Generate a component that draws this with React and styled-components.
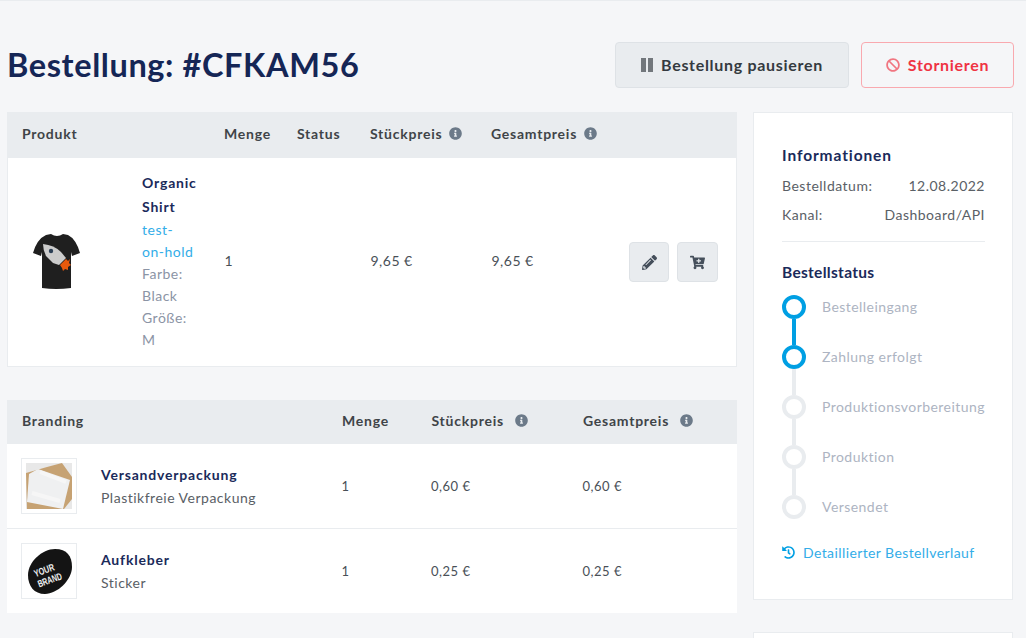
import React from 'react';
import styled, {createGlobalStyle} from 'styled-components';
import {FaBan, FaInfoCircle, FaPencilAlt, FaCartPlus, FaHistory} from 'react-icons/fa';

const GlobalStyle = createGlobalStyle`
  html, body {
    margin: 0;
    height: 638px;
    overflow: hidden;
    background: #f5f6f8;
  }
  * { box-sizing: border-box; }
  body {
    font-family: Lato, "Open Sans", sans-serif;
    font-size: 14px;
    letter-spacing: 0.5px;
    color: #495057;
  }
`
const Page = styled.div`
  border-top: 1px solid #e9ecef;
  padding: 41px 12px 0 7px;
`
const Header = styled.header`
  display: flex;
  justify-content: space-between;
  align-items: center;
  height: 46px;
  margin-bottom: 24px;
`
const Title = styled.h1`
  margin: 0 0 2px;
  font-size: 32.5px;
  font-weight: 700;
  letter-spacing: 0.6px;
  color: #152656;
`
const Actions = styled.div`
  display: flex;
  gap: 12px;
`
const Button = styled.button`
  display: flex;
  align-items: center;
  justify-content: center;
  gap: 8px;
  width: ${props => props.$danger ? '153px' : '234px'};
  height: 46px;
  padding: 0 0 2px;
  border-radius: 4px;
  border: 1px solid ${props => props.$danger ? '#f9a9af' : '#dee2e6'};
  background: ${props => props.$danger ? '#f5f6f8' : '#e9ecef'};
  color: ${props => props.$danger ? '#ef3343' : '#343a40'};
  font: inherit;
  font-size: 16px;
  font-weight: 700;
  letter-spacing: 0.7px;
  svg {
    font-size: 14px;
    opacity: 0.65;
    margin-top: 2px;
  }
`
const Content = styled.div`
  display: grid;
  grid-template-columns: 730px 260px;
  gap: 16px;
  align-items: start;
`
const TableWrap = styled.section`
  margin-bottom: 33px;
`
const ProductGrid = styled.div`
  display: grid;
  grid-template-columns: 202px 73px 73px 121px 134px 1fr;
  align-items: center;
`
const BrandingGrid = styled.div`
  display: grid;
  grid-template-columns: 320px 89.5px 151.5px 1fr;
  align-items: center;
`
const HeadRow = styled.div`
  height: ${props => props.$h}px;
  background: #e9ecef;
  font-weight: 700;
  font-size: 14px;
  letter-spacing: 0.75px;
  color: #3f4448;
`
const HeadCell = styled.div`
  display: flex;
  align-items: center;
  gap: ${props => props.$gap || 7}px;
  padding: 0 0 4px 15px;
  white-space: nowrap;
  svg {
    font-size: 13px;
    color: #6c7a89;
  }
`
const ProductRow = styled.div`
  height: 209px;
  background: #fff;
  border: 1px solid #e9ecef;
  border-top: 0;
`
const ProductCell = styled.div`
  display: flex;
  align-items: center;
  padding-left: 25px;
`
const ThumbSlot = styled.div`
  width: 109px;
  line-height: 0;
`
const ProductInfo = styled.div`
  width: 60px;
  padding-bottom: 2px;
  line-height: 22px;
  color: #8b94a5;
`
const ProductName = styled.div`
  font-weight: 700;
  letter-spacing: 0.8px;
  color: #1a2a5a;
  line-height: 24px;
`
const SkuLink = styled.a`
  display: block;
  color: #33ade8;
`
const Cell = styled.div`
  padding: 0 0 ${props => props.$raised ? '3px' : '0'} 14.5px;
  font-size: ${props => props.$small ? '13px' : '14px'};
  color: #495057;
`
const RowActions = styled.div`
  display: flex;
  gap: 8px;
  padding-left: 18px;
`
const IconButton = styled.button`
  display: flex;
  align-items: center;
  justify-content: center;
  width: ${props => props.$wide ? '41px' : '40px'};
  height: 40px;
  padding: 0;
  border-radius: 4px;
  border: 1px solid #dee2e6;
  background: #e9ecef;
  color: #454f5b;
  font-size: 15px;
`
const BrandRow = styled.div`
  height: ${props => props.$h}px;
  background: #fff;
  border-top: ${props => props.$line ? '1px solid #e9ecef' : '0'};
`
const BrandCell = styled.div`
  display: flex;
  align-items: center;
  gap: 24px;
  padding-left: 14px;
`
const Thumb = styled.div`
  width: 56px;
  height: 56px;
  padding: 4px;
  background: #fff;
  border: 1px solid #e9ecef;
  line-height: 0;
`
const BrandName = styled.div`
  font-weight: 700;
  letter-spacing: 0.8px;
  color: #1a2a5a;
  margin-bottom: 6px;
`
const BrandSub = styled.div`
  color: #5a6066;
`
const Sidebar = styled.div`
  display: flex;
  flex-direction: column;
  gap: 32px;
`
const Card = styled.aside`
  background: #fff;
  border: 1px solid #e9ecef;
  padding: 32px 27px 38px 28px;
`
const EmptyCard = styled.div`
  height: 80px;
  background: #fff;
  border: 1px solid #e9ecef;
`
const CardTitle = styled.h3`
  margin: 0 0 ${props => props.$gap}px;
  font-size: 15.5px;
  line-height: 20px;
  font-weight: 700;
  letter-spacing: ${props => props.$spacing}px;
  color: #1a2a5a;
`
const InfoRow = styled.div`
  display: flex;
  justify-content: space-between;
  height: 29px;
  line-height: 22px;
  font-size: 14px;
  color: #5a6066;
`
const Divider = styled.hr`
  border: 0;
  border-top: 1px solid #e9ecef;
  margin: 8px 0 20px;
`
const Steps = styled.ol`
  list-style: none;
  margin: 13px 0 0;
  padding: 0;
`
const Step = styled.li`
  display: flex;
  gap: 16px;
`
const Rail = styled.div`
  display: flex;
  flex-direction: column;
  align-items: center;
  width: 24px;
`
const Dot = styled.span`
  width: 24px;
  height: 24px;
  border-radius: 50%;
  background: #fff;
  border: 4px solid ${props => props.$done ? '#009fe3' : '#e9ecef'};
`
const Line = styled.span`
  width: 4px;
  height: 26px;
  background: ${props => props.$done ? '#009fe3' : '#e9ecef'};
`
const StepLabel = styled.span`
  line-height: 24px;
  font-size: 14px;
  letter-spacing: 0.45px;
  color: #adb4c2;
`
const HistoryLink = styled.a`
  display: flex;
  align-items: center;
  gap: 8px;
  margin-top: 25px;
  font-size: 14px;
  letter-spacing: 0.4px;
  color: #33ade8;
  svg {
    color: #009fe3;
    font-size: 13px;
  }
`
const StickerText = styled.text`
  font-family: "Liberation Sans", sans-serif;
  font-size: 10px;
  font-weight: 700;
  letter-spacing: 0;
  fill: #f0f0f0;
`

const Pause = () => (
  <svg width="12" height="14" viewBox="0 0 12 14">
    <rect width="5" height="14" fill="currentColor" />
    <rect x="7" width="5" height="14" fill="currentColor" />
  </svg>
)

const Shirt = () => (
  <svg width="47" height="56" viewBox="0 0 47 56">
    <path d="M13 1 L18 0 Q24 4 30 0 L35 1 Q43 5 47 19 L39 22 L38 18 L38 54 Q23 56 9 54 L9 18 L8 22 L0 19 Q4 5 13 1 Z" fill="#1f1f1f" />
    <path d="M10 10 Q21 11 28 18 L33 24 L26 31 L20 29 L13 22 Q10 16 10 10 Z" fill="#cccccc" />
    <circle cx="18" cy="17" r="2.200" fill="#2b3f55" />
    <path d="M27 31 L33 25 L35 27 L37 25 L36 29 L38 31 L35 33 L35 36 L32 35 L30 37 L29 34 Z" fill="#e8590c" />
  </svg>
)

const Packaging = () => (
  <svg width="46" height="46" viewBox="0 0 46 46">
    <rect width="46" height="46" fill="#e8e8e8" />
    <path d="M21 4 L36 0 L46 14 V36 L38 46 H1 L0 10 Z" fill="#c6a273" />
    <path d="M3 11 L12 6 L44 17 L37 46 L1 39 Z" fill="#eff0f1" />
    <path d="M14 9 L40 19 M6 30 L34 38" stroke="#f6f6f6" strokeWidth="4" />
  </svg>
)

const Sticker = () => (
  <svg width="46" height="46" viewBox="0 0 46 46">
    <path d="M2 27 C2 14 16 1 29 1 C41 1 46 8 46 19 C46 32 31 46 19 46 C8 46 2 38 2 27 Z" fill="#141414" />
    <g transform="rotate(-20 21 26)">
      <StickerText x="9" y="25" textLength="21" lengthAdjust="spacingAndGlyphs">YOUR</StickerText>
      <StickerText x="9" y="36" textLength="25" lengthAdjust="spacingAndGlyphs">BRAND</StickerText>
    </g>
  </svg>
)

const brandingItems = [
  {name: 'Versandverpackung', sub: 'Plastikfreie Verpackung', price: '0,60 €', image: <Packaging />, height: 84},
  {name: 'Aufkleber', sub: 'Sticker', price: '0,25 €', image: <Sticker />, height: 85, line: true},
];
const statusSteps = [
  {label: 'Bestelleingang', done: true, lineDone: true},
  {label: 'Zahlung erfolgt', done: true},
  {label: 'Produktionsvorbereitung'},
  {label: 'Produktion'},
  {label: 'Versendet', last: true},
];

function App() {
  return (
    <>
      <GlobalStyle />
      <Page>
        <Header>
          <Title>Bestellung: #CFKAM56</Title>
          <Actions>
            <Button><Pause />Bestellung pausieren</Button>
            <Button $danger><FaBan />Stornieren</Button>
          </Actions>
        </Header>
        <Content>
          <div>
            <TableWrap>
              <HeadRow as={ProductGrid} $h={46}>
                <HeadCell>Produkt</HeadCell>
                <HeadCell>Menge</HeadCell>
                <HeadCell>Status</HeadCell>
                <HeadCell>Stückpreis <FaInfoCircle /></HeadCell>
                <HeadCell>Gesamtpreis <FaInfoCircle /></HeadCell>
                <div />
              </HeadRow>
              <ProductRow as={ProductGrid}>
                <ProductCell>
                  <ThumbSlot><Shirt /></ThumbSlot>
                  <ProductInfo>
                    <ProductName>Organic Shirt</ProductName>
                    <SkuLink>test-<br />on-hold</SkuLink>
                    Farbe: Black
                    <br />
                    Größe: M
                  </ProductInfo>
                </ProductCell>
                <Cell $raised>1</Cell>
                <Cell $raised />
                <Cell $raised>9,65 €</Cell>
                <Cell $raised>9,65 €</Cell>
                <RowActions>
                  <IconButton><FaPencilAlt /></IconButton>
                  <IconButton $wide><FaCartPlus /></IconButton>
                </RowActions>
              </ProductRow>
            </TableWrap>
            <section>
              <HeadRow as={BrandingGrid} $h={44}>
                <HeadCell>Branding</HeadCell>
                <HeadCell>Menge</HeadCell>
                <HeadCell $gap={11}>Stückpreis <FaInfoCircle /></HeadCell>
                <HeadCell $gap={11}>Gesamtpreis <FaInfoCircle /></HeadCell>
              </HeadRow>
              {brandingItems.map(item => (
                <BrandRow as={BrandingGrid} key={item.name} $h={item.height} $line={item.line}>
                  <BrandCell>
                    <Thumb>{item.image}</Thumb>
                    <div>
                      <BrandName>{item.name}</BrandName>
                      <BrandSub>{item.sub}</BrandSub>
                    </div>
                  </BrandCell>
                  <Cell $small>1</Cell>
                  <Cell $small>{item.price}</Cell>
                  <Cell $small>{item.price}</Cell>
                </BrandRow>
              ))}
            </section>
          </div>
          <Sidebar>
            <Card>
              <CardTitle $gap={10} $spacing={0.9}>Informationen</CardTitle>
              <InfoRow><span>Bestelldatum:</span><span>12.08.2022</span></InfoRow>
              <InfoRow><span>Kanal:</span><span>Dashboard/API</span></InfoRow>
              <Divider />
              <CardTitle $gap={10} $spacing={0.3}>Bestellstatus</CardTitle>
              <Steps>
                {statusSteps.map(step => (
                  <Step key={step.label}>
                    <Rail>
                      <Dot $done={step.done} />
                      {!step.last && <Line $done={step.lineDone} />}
                    </Rail>
                    <StepLabel>{step.label}</StepLabel>
                  </Step>
                ))}
              </Steps>
              <HistoryLink><FaHistory />Detaillierter Bestellverlauf</HistoryLink>
            </Card>
            <EmptyCard />
          </Sidebar>
        </Content>
      </Page>
    </>
  )
}

export default App;
